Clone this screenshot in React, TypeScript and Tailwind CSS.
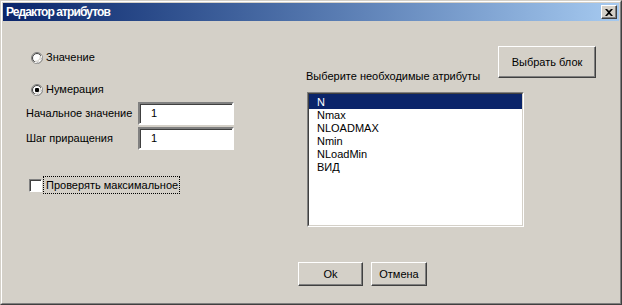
const font = "font-['Liberation_Sans',Arial,sans-serif]";

const Radio = ({ checked }: { checked?: boolean }) => (
  <svg width="12" height="12" viewBox="0 0 12 12" className="shrink-0">
    <circle cx="6" cy="6" r="5.5" fill="none" stroke="#808080" />
    <circle cx="6" cy="6" r="4.5" fill="#fff" stroke="#404040" />
    <path d="M10.5 3.5A5.5 5.5 0 0 1 3.5 10.5" fill="none" stroke="#fff" strokeWidth="1" />
    <path d="M9.2 3.8A4.5 4.5 0 0 1 3.8 9.2" fill="none" stroke="#d4d0c8" strokeWidth="1" />
    {checked && <rect x="4" y="4" width="4" height="4" rx="1" fill="#000" />}
  </svg>
);

const Button = ({ label, w, h }: { label: string; w: string; h: string }) => (
  <div
    className={`${w} ${h} flex items-center justify-center border border-t-white border-l-white border-b-[#404040] border-r-[#404040] shadow-[inset_-1px_-1px_#808080] bg-[#d4d0c8] text-[11px] text-black`}
  >
    {label}
  </div>
);

const Field = ({ label, mt }: { label: string; mt: string }) => (
  <div className={`flex items-center ${mt}`}>
    <span className="w-[112px] whitespace-nowrap text-[11px]">{label}</span>
    <div className="w-[96px] h-[23px] bg-white border-2 border-t-[#808080] border-l-[#808080] border-b-white border-r-white shadow-[inset_1px_1px_#404040] pl-[11px] flex items-center text-[11px]">
      1
    </div>
  </div>
);

const items = ["N", "Nmax", "NLOADMAX", "Nmin", "NLoadMin", "ВИД"];

export default function App() {
  return (
    <div className={`${font} w-[622px] h-[305px] bg-[#d4d0c8] border border-t-[#d4d0c8] border-l-[#d4d0c8] border-b-[#404040] border-r-[#404040]`}>
      <div className="h-full border border-t-white border-l-white border-b-[#808080] border-r-[#808080] p-px flex flex-col">
        {/* title bar */}
        <div className="h-[18px] shrink-0 bg-gradient-to-r from-[#0a246a] to-[#a6caf0] flex items-center justify-between pl-[3px] pr-[2px]">
          <span className="text-white font-bold text-[12px] tracking-[-0.9px]">Редактор атрибутов</span>
          <div className="w-[16px] h-[14px] bg-[#d4d0c8] border border-t-white border-l-white border-b-[#404040] border-r-[#404040] shadow-[inset_-1px_-1px_#808080] flex items-center justify-center">
            <svg width="8" height="7" viewBox="0 0 8 7">
              <path d="M0 0h2l2 2 2-2h2L5 3.5 8 7H6L4 5 2 7H0l3-3.5z" fill="#000" />
            </svg>
          </div>
        </div>

        {/* body */}
        <div className="flex-1 flex flex-col text-black">
          <div className="h-[241px] flex">
            <div className="w-[303px] pl-[23px] pt-[30px] flex flex-col">
              <div className="flex items-center h-[13px] ml-[5px] gap-[3px] text-[11px]">
                <Radio />
                <span>Значение</span>
              </div>
              <div className="flex items-center h-[13px] ml-[5px] gap-[3px] text-[11px] mt-[19px]">
                <Radio checked />
                <span>Нумерация</span>
              </div>
              <Field label="Начальное значение" mt="mt-[6px]" />
              <Field label="Шаг приращения" mt="mt-[2px]" />
              <div className="flex items-center mt-[26px] ml-[3px] h-[18px]">
                <div className="w-[13px] h-[13px] bg-white border border-t-[#808080] border-l-[#808080] border-b-white border-r-white shadow-[inset_1px_1px_#404040]" />
                <span className="ml-px h-[18px] pl-[2px] pr-px flex items-center border border-dotted border-black text-[11px]">
                  Проверять максимальное
                </span>
              </div>
            </div>

            <div className="w-[290px] pt-[25px] flex flex-col">
              <div className="flex justify-between items-start">
                <span className="mt-[24px] text-[11px] leading-[13px]">Выберите необходимые атрибуты</span>
                <Button label="Выбрать блок" w="w-[98px]" h="h-[32px]" />
              </div>
              <div className="mt-[9px] ml-px w-[217px] h-[135px] bg-white border border-t-[#808080] border-l-[#808080] border-b-white border-r-white">
                <div className="h-full border border-t-[#404040] border-l-[#404040] border-b-[#d4d0c8] border-r-[#d4d0c8] text-[11px]">
                  {items.map((it, i) => (
                    <div
                      key={it}
                      className={
                        i === 0
                          ? "h-[15px] pt-[2px] leading-[13px] pl-[8px] bg-[#0a246a] text-white"
                          : "h-[13px] leading-[13px] pl-[8px]"
                      }
                    >
                      {it}
                    </div>
                  ))}
                </div>
              </div>
            </div>
          </div>

          <div className="flex gap-[8px] pl-[295px]">
            <Button label="Ok" w="w-[65px]" h="h-[24px]" />
            <Button label="Отмена" w="w-[56px]" h="h-[24px]" />
          </div>
        </div>
      </div>
    </div>
  );
}
